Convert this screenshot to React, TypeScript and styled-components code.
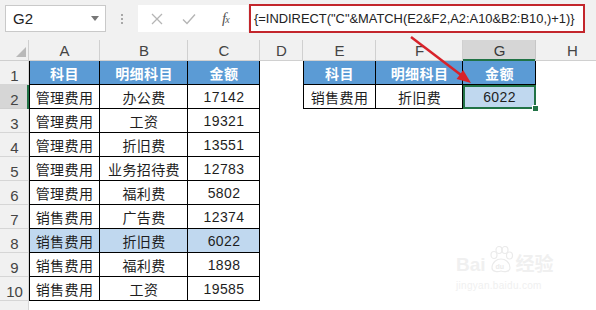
import React from 'react';
import styled, { createGlobalStyle, css } from 'styled-components';

const Global = createGlobalStyle`
  html, body { margin: 0; padding: 0; background: #fff; overflow: hidden; }
  body { font-family: "Liberation Sans", "Noto Sans CJK SC", sans-serif; }
  #root { width: 596px; height: 310px; }
`;

const Page = styled.div`
  position: relative;
  width: 596px;
  height: 310px;
  overflow: hidden;
  background: #fff;
`;

const Toolbar = styled.div`
  height: 40px;
  box-sizing: border-box;
  background: #f1f1f1;
  display: flex;
  align-items: flex-start;
  padding: 4px 0 0 5px;
`;

const NameBox = styled.div`
  margin-top: 1px;
  width: 101px;
  height: 27px;
  box-sizing: border-box;
  background: #fff;
  border: 1px solid #c9c9c9;
  display: flex;
  align-items: center;
  justify-content: space-between;
  padding: 0 6px 0 7px;
  font-size: 15px;
  color: #222;
`;

const DropArrow = styled.span`
  width: 0;
  height: 0;
  border-left: 4px solid transparent;
  border-right: 4px solid transparent;
  border-top: 5px solid #777;
`;

const Sep = styled.div`
  width: 32px;
  height: 29px;
  display: flex;
  flex-direction: column;
  align-items: center;
  justify-content: center;
  gap: 2px;
`;

const Dot = styled.span`
  width: 2px;
  height: 2px;
  background: #a8a8a8;
`;

const FxBox = styled.div`
  margin-top: 1px;
  width: 110px;
  height: 27px;
  background: #fff;
  display: flex;
  align-items: center;
`;

const FxBtn = styled.span<{ $w: number }>`
  width: ${(p) => p.$w}px;
  display: flex;
  align-items: center;
  justify-content: center;
  color: #b8b8b8;
`;

const FxLabel = styled.span`
  font-family: "Liberation Serif", serif;
  font-style: italic;
  font-size: 15px;
  color: #555;
  letter-spacing: -1px;
  & small { font-size: 10px; }
`;

const FormulaInput = styled.div`
  margin-left: 1px;
  width: 336px;
  height: 29px;
  box-sizing: border-box;
  border: 2px solid #c3262c;
  background: #fff;
  display: flex;
  align-items: center;
  padding-left: 3px;
  font-size: 12.9px;
  color: #222;
  white-space: nowrap;
  overflow: hidden;
`;

const Sheet = styled.div`
  display: grid;
  grid-template-columns: 29px 71px 88px 72px 43px 73px 87px 73px 73px;
  grid-template-rows: 21px repeat(11, 24px);
`;

type Kind = 'empty' | 'head' | 'data' | 'hl' | 'active';

const Corner = styled.div`
  position: relative;
  background: #f1f1f1;
  box-shadow: inset -1px -1px 0 #cfcfcf;
  &::after {
    content: '';
    position: absolute;
    right: 3px;
    bottom: 4px;
    width: 0;
    height: 0;
    border-left: 10px solid transparent;
    border-bottom: 10px solid #b9b9b9;
  }
`;

const ColHead = styled.div<{ $sel?: boolean }>`
  background: ${(p) => (p.$sel ? '#d6d6d6' : '#f1f1f1')};
  color: ${(p) => (p.$sel ? '#3a3a3a' : '#444')};
  font-size: 15px;
  display: flex;
  align-items: flex-end;
  justify-content: center;
  padding-bottom: 2px;
  box-sizing: border-box;
  box-shadow: ${(p) =>
    p.$sel ? 'inset -1px 0 0 #c6c6c6, inset 0 -2px 0 #217346' : 'inset -1px -1px 0 #d0d0d0'};
`;

const RowHead = styled.div<{ $sel?: boolean }>`
  background: ${(p) => (p.$sel ? '#d6d6d6' : '#f1f1f1')};
  color: #444;
  font-size: 15px;
  display: flex;
  align-items: flex-end;
  justify-content: center;
  padding-bottom: 1px;
  box-sizing: border-box;
  box-shadow: ${(p) =>
    p.$sel ? 'inset -2px 0 0 #217346, inset 0 -1px 0 #cfcfcf' : 'inset -1px -1px 0 #d6d6d6'};
`;

const kindBg: Record<Kind, string> = {
  empty: '#fff',
  head: '#5b9bd5',
  data: '#fff',
  hl: '#c0d8ef',
  active: '#c0d8ef',
};

const Cell = styled.div<{ $kind: Kind; $left?: boolean }>`
  position: relative;
  display: flex;
  align-items: center;
  justify-content: center;
  box-sizing: border-box;
  background: ${(p) => kindBg[p.$kind]};
  font-size: 14px;
  letter-spacing: 0.4px;
  color: #1e1e1e;
  white-space: nowrap;
  ${(p) =>
    p.$kind !== 'empty' &&
    css`
      box-shadow: inset -1px -1px 0 #000 ${p.$left ? ', inset 1px 0 0 #000' : ''};
    `}
  ${(p) =>
    p.$kind === 'head' &&
    css`
      color: #fff;
      font-weight: bold;
    `}
  ${(p) =>
    p.$kind === 'active' &&
    css`
      box-shadow: inset 0 0 0 2px #217346;
      &::after {
        content: '';
        position: absolute;
        right: -3px;
        bottom: -3px;
        width: 5px;
        height: 5px;
        background: #217346;
        border: 1px solid #fff;
        z-index: 2;
      }
    `}
`;

const Overlay = styled.svg`
  position: absolute;
  left: 0;
  top: 0;
  pointer-events: none;
`;

const Watermark = styled.div`
  position: absolute;
  left: 456px;
  top: 246px;
  color: #f0f0f0;
  display: flex;
  flex-direction: column;
  align-items: flex-start;
  pointer-events: none;
`;

const WmTop = styled.div`
  display: flex;
  align-items: flex-end;
  gap: 2px;
  font-size: 19px;
  font-weight: bold;
  line-height: 1;
`;

const WmSub = styled.div`
  font-size: 10px;
  margin-top: 6px;
  letter-spacing: 0.3px;
`;

const COLS = ['A', 'B', 'C', 'D', 'E', 'F', 'G', 'H'];

type CellData = { text: string; kind: Kind; left?: boolean };

const left: [string, string, string][] = [
  ['科目', '明细科目', '金额'],
  ['管理费用', '办公费', '17142'],
  ['管理费用', '工资', '19321'],
  ['管理费用', '折旧费', '13551'],
  ['管理费用', '业务招待费', '12783'],
  ['管理费用', '福利费', '5802'],
  ['销售费用', '广告费', '12374'],
  ['销售费用', '折旧费', '6022'],
  ['销售费用', '福利费', '1898'],
  ['销售费用', '工资', '19585'],
];

const right: [string, string, string][] = [
  ['科目', '明细科目', '金额'],
  ['销售费用', '折旧费', '6022'],
];

function rowCells(r: number): CellData[] {
  const cells: CellData[] = [];
  const empty: CellData = { text: '', kind: 'empty' };
  const l = left[r - 1];
  if (l) {
    const kind: Kind = r === 1 ? 'head' : r === 8 ? 'hl' : 'data';
    cells.push({ text: l[0], kind, left: true }, { text: l[1], kind }, { text: l[2], kind });
  } else {
    cells.push(empty, empty, empty);
  }
  cells.push(empty);
  const rt = right[r - 1];
  if (rt) {
    const kind: Kind = r === 1 ? 'head' : 'data';
    cells.push(
      { text: rt[0], kind, left: true },
      { text: rt[1], kind },
      { text: rt[2], kind: r === 2 ? 'active' : kind },
    );
  } else {
    cells.push(empty, empty, empty);
  }
  cells.push(empty);
  return cells;
}

export default function App() {
  const rows = Array.from({ length: 11 }, (_, i) => i + 1);
  return (
    <Page>
      <Global />
      <Toolbar>
        <NameBox>
          G2
          <DropArrow />
        </NameBox>
        <Sep>
          <Dot />
          <Dot />
          <Dot />
        </Sep>
        <FxBox>
          <FxBtn $w={38}>
            <svg width="12" height="12" viewBox="0 0 12 12">
              <path d="M1 1 L11 11 M11 1 L1 11" stroke="#b5b5b5" strokeWidth="1.3" fill="none" />
            </svg>
          </FxBtn>
          <FxBtn $w={28}>
            <svg width="14" height="12" viewBox="0 0 14 12">
              <path d="M1 6.5 L5 10.5 L13 1.5" stroke="#b5b5b5" strokeWidth="1.4" fill="none" />
            </svg>
          </FxBtn>
          <FxBtn $w={46}>
            <FxLabel>
              f<small>x</small>
            </FxLabel>
          </FxBtn>
        </FxBox>
        <FormulaInput>{'{=INDIRECT("C"&MATCH(E2&F2,A2:A10&B2:B10,)+1)}'}</FormulaInput>
      </Toolbar>
      <Sheet>
        <Corner />
        {COLS.map((c) => (
          <ColHead key={c} $sel={c === 'G'}>
            {c}
          </ColHead>
        ))}
        {rows.map((r) => (
          <React.Fragment key={r}>
            <RowHead $sel={r === 2}>{r <= 10 ? r : ''}</RowHead>
            {rowCells(r).map((c, i) => (
              <Cell key={i} $kind={c.kind} $left={c.left}>
                {c.text}
              </Cell>
            ))}
          </React.Fragment>
        ))}
      </Sheet>
      <Overlay width="596" height="310" viewBox="0 0 596 310">
        <line x1="411" y1="37" x2="461" y2="75" stroke="#d8222a" strokeWidth="2.5" />
        <polygon points="471,83 456.6,78.9 463.2,70.1" fill="#d8222a" />
      </Overlay>
      <Watermark>
        <WmTop>
          <span>Bai</span>
          <svg width="26" height="28" viewBox="0 0 26 28">
            <g fill="none" stroke="#ebebeb" strokeWidth="1.2">
              <ellipse cx="6" cy="9" rx="3" ry="3.5" />
              <ellipse cx="11" cy="4" rx="3" ry="3.5" />
              <ellipse cx="17" cy="4" rx="3" ry="3.5" />
              <ellipse cx="21.5" cy="9.5" rx="3" ry="3.5" />
              <path d="M4 22 C4 16 9 13 13 13 C17 13 22 16 22 22 C22 26 16 26 13 25 C10 26 4 26 4 22 Z" />
            </g>
            <text x="7.5" y="23" fontSize="7" fill="#ebebeb" fontFamily="Liberation Sans">du</text>
          </svg>
          <span>经验</span>
        </WmTop>
        <WmSub>jingyan.baidu.com</WmSub>
      </Watermark>
    </Page>
  );
}
